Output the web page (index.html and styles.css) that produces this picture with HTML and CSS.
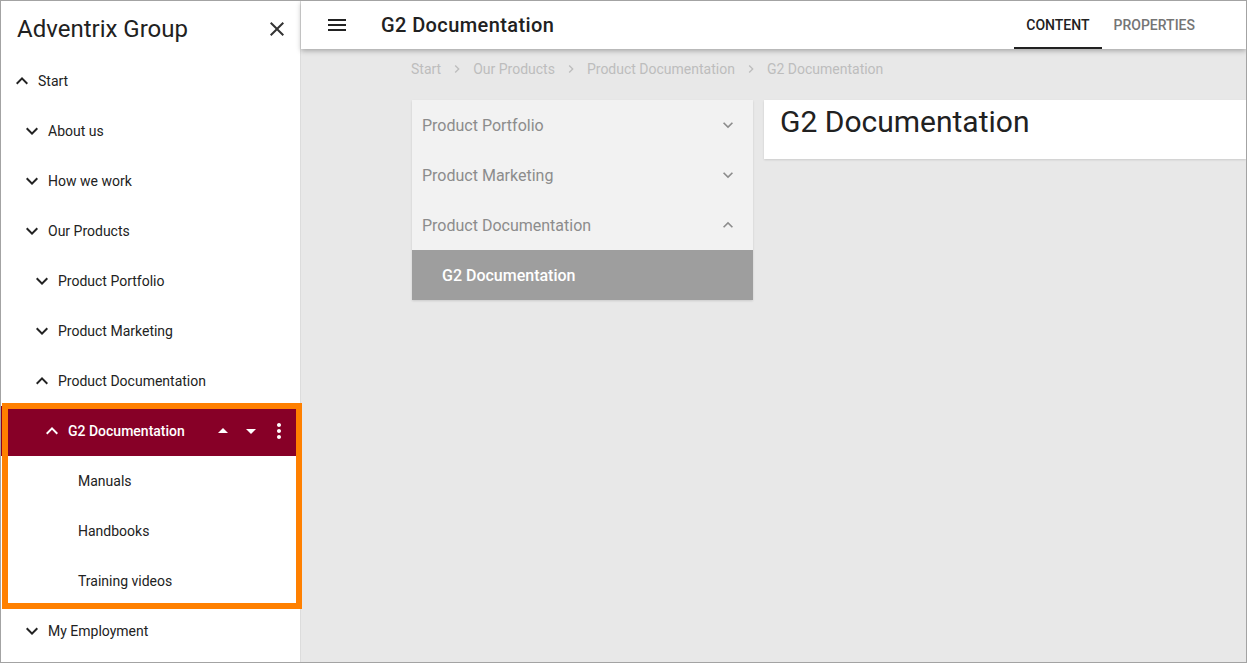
FILE: index.html
```html
<!DOCTYPE html>
<html>
<head>
<meta charset="utf-8">
<link rel="stylesheet" href="styles.css">
</head>
<body>
<div class="frame">
  <aside class="sidebar">
    <div class="side-head">
      <span class="side-title">Adventrix Group</span>
      <svg class="icon close" viewBox="0 0 24 24"><path d="M19 6.41L17.59 5 12 10.59 6.41 5 5 6.41 10.59 12 5 17.59 6.41 19 12 13.41 17.59 19 19 17.59 13.41 12z"/></svg>
    </div>
    <nav class="tree">
      <div class="row lv0"><svg class="icon chev" viewBox="0 0 24 24"><path d="M12 8l-6 6 1.41 1.41L12 10.83l4.59 4.58L18 14z"/></svg><span>Start</span></div>
      <div class="row lv1"><svg class="icon chev" viewBox="0 0 24 24"><path d="M16.59 8.59L12 13.17 7.41 8.59 6 10l6 6 6-6z"/></svg><span>About us</span></div>
      <div class="row lv1"><svg class="icon chev" viewBox="0 0 24 24"><path d="M16.59 8.59L12 13.17 7.41 8.59 6 10l6 6 6-6z"/></svg><span>How we work</span></div>
      <div class="row lv1"><svg class="icon chev" viewBox="0 0 24 24"><path d="M16.59 8.59L12 13.17 7.41 8.59 6 10l6 6 6-6z"/></svg><span>Our Products</span></div>
      <div class="row lv2"><svg class="icon chev" viewBox="0 0 24 24"><path d="M16.59 8.59L12 13.17 7.41 8.59 6 10l6 6 6-6z"/></svg><span>Product Portfolio</span></div>
      <div class="row lv2"><svg class="icon chev" viewBox="0 0 24 24"><path d="M16.59 8.59L12 13.17 7.41 8.59 6 10l6 6 6-6z"/></svg><span>Product Marketing</span></div>
      <div class="row lv2"><svg class="icon chev" viewBox="0 0 24 24"><path d="M12 8l-6 6 1.41 1.41L12 10.83l4.59 4.58L18 14z"/></svg><span>Product Documentation</span></div>
      <div class="row lv3 active">
        <svg class="icon chev" viewBox="0 0 24 24"><path d="M12 8l-6 6 1.41 1.41L12 10.83l4.59 4.58L18 14z"/></svg><span class="label">G2 Documentation</span>
        <div class="actions">
          <svg class="icon" viewBox="0 0 24 24"><path d="M7 14l5-5 5 5z"/></svg>
          <svg class="icon" viewBox="0 0 24 24"><path d="M7 10l5 5 5-5z"/></svg>
          <svg class="icon" viewBox="0 0 24 24"><path d="M12 8c1.1 0 2-.9 2-2s-.9-2-2-2-2 .9-2 2 .9 2 2 2zm0 2c-1.1 0-2 .9-2 2s.9 2 2 2 2-.9 2-2-.9-2-2-2zm0 6c-1.1 0-2 .9-2 2s.9 2 2 2 2-.9 2-2-.9-2-2-2z"/></svg>
        </div>
      </div>
      <div class="row lv4"><span class="spacer"></span><span>Manuals</span></div>
      <div class="row lv4"><span class="spacer"></span><span>Handbooks</span></div>
      <div class="row lv4"><span class="spacer"></span><span>Training videos</span></div>
      <div class="row lv1"><svg class="icon chev" viewBox="0 0 24 24"><path d="M16.59 8.59L12 13.17 7.41 8.59 6 10l6 6 6-6z"/></svg><span>My Employment</span></div>
    </nav>
    <div class="highlight"></div>
  </aside>
  <main class="main">
    <header class="topbar">
      <svg class="icon menu" viewBox="0 0 24 24"><path d="M3 18h18v-2H3v2zm0-5h18v-2H3v2zm0-7v2h18V6H3z"/></svg>
      <h1 class="page-title">G2 Documentation</h1>
      <div class="tabs">
        <div class="tab current">Content</div>
        <div class="tab">Properties</div>
      </div>
    </header>
    <div class="content">
      <div class="crumbs">
        <span>Start</span>
        <svg class="sep" viewBox="0 0 24 24"><path d="M10 6L8.59 7.41 13.17 12l-4.58 4.59L10 18l6-6z"/></svg>
        <span>Our Products</span>
        <svg class="sep" viewBox="0 0 24 24"><path d="M10 6L8.59 7.41 13.17 12l-4.58 4.59L10 18l6-6z"/></svg>
        <span>Product Documentation</span>
        <svg class="sep" viewBox="0 0 24 24"><path d="M10 6L8.59 7.41 13.17 12l-4.58 4.59L10 18l6-6z"/></svg>
        <span>G2 Documentation</span>
      </div>
      <div class="cards">
        <div class="menu-card">
          <div class="mrow"><span>Product Portfolio</span><svg class="mchev" viewBox="0 0 24 24"><path d="M16.59 8.59L12 13.17 7.41 8.59 6 10l6 6 6-6z"/></svg></div>
          <div class="mrow"><span>Product Marketing</span><svg class="mchev" viewBox="0 0 24 24"><path d="M16.59 8.59L12 13.17 7.41 8.59 6 10l6 6 6-6z"/></svg></div>
          <div class="mrow"><span>Product Documentation</span><svg class="mchev" viewBox="0 0 24 24"><path d="M12 8l-6 6 1.41 1.41L12 10.83l4.59 4.58L18 14z"/></svg></div>
          <div class="mrow sub"><span>G2 Documentation</span></div>
        </div>
        <div class="title-card">
          <h2>G2 Documentation</h2>
        </div>
      </div>
    </div>
  </main>
</div>
</body>
</html>
```
FILE: styles.css
```css
html, body {
  margin: 0;
  padding: 0;
  background: #fff;
}
body {
  font-family: Roboto, "Noto Sans", "Liberation Sans", sans-serif;
  color: #212121;
}
.frame {
  width: 1247px;
  height: 663px;
  box-sizing: border-box;
  border: 1px solid #a3a3a3;
  display: flex;
  overflow: hidden;
}
.icon {
  width: 24px;
  height: 24px;
  fill: currentColor;
  flex: none;
  display: block;
}
/* Sidebar */
.sidebar {
  width: 300px;
  flex: none;
  box-sizing: border-box;
  border-right: 1px solid #dcdcdc;
  background: #fff;
  position: relative;
}
.side-head {
  height: 55px;
  display: flex;
  align-items: center;
  padding: 0 11px 0 16px;
}
.side-title {
  font-size: 24px;
  color: #212121;
  flex: 1;
}
.close {
  color: #333;
}
.tree {
  display: flex;
  flex-direction: column;
}
.row {
  height: 50px;
  display: flex;
  align-items: center;
  font-size: 14px;
  color: #222;
  padding-right: 9px;
}
.row .chev, .row .spacer {
  margin-right: 4px;
}
.row .spacer {
  width: 24px;
  flex: none;
}
.lv0 { padding-left: 9px; }
.lv1 { padding-left: 19px; }
.lv2 { padding-left: 29px; }
.lv3 { padding-left: 39px; }
.lv4 { padding-left: 49px; }
.active {
  background: #870027;
  color: #fff;
  font-weight: 500;
}
.active .label {
  flex: 1;
}
.actions {
  display: flex;
  gap: 4px;
}
.highlight {
  position: absolute;
  left: 1px;
  top: 402px;
  width: 300px;
  height: 206px;
  box-sizing: border-box;
  border: 6px solid #ff8000;
  pointer-events: none;
}
/* Main */
.main {
  flex: 1;
  background: #e8e8e8;
  display: flex;
  flex-direction: column;
  min-width: 0;
}
.topbar {
  height: 48px;
  flex: none;
  background: #fff;
  display: flex;
  align-items: center;
  padding-left: 24px;
  box-shadow: 0 2px 5px rgba(0, 0, 0, 0.28);
  position: relative;
  z-index: 1;
}
.menu {
  color: #222;
}
.page-title {
  margin: 0 0 0 32px;
  font-size: 20px;
  font-weight: 500;
  letter-spacing: 0.4px;
  color: #212121;
  flex: 1;
}
.tabs {
  display: flex;
  height: 48px;
  margin-right: 39px;
}
.tab {
  height: 48px;
  box-sizing: border-box;
  padding: 0 12px;
  display: flex;
  align-items: center;
  font-size: 14px;
  font-weight: 500;
  text-transform: uppercase;
  color: #757575;
  border-bottom: 2px solid transparent;
  padding-top: 2px;
}
.tab.current {
  color: #212121;
  border-bottom-color: #212121;
}
.content {
  padding: 10px 0 0 110px;
}
.crumbs {
  display: flex;
  align-items: center;
  height: 20px;
  font-size: 14px;
  color: #bdbdbd;
}
.sep {
  width: 16px;
  height: 16px;
  fill: #bdbdbd;
  margin: 0 8px;
}
.cards {
  display: flex;
  align-items: flex-start;
  gap: 11px;
  margin-top: 21px;
  margin-left: 1px;
}
.menu-card {
  width: 341px;
  flex: none;
  background: #f2f2f2;
  box-shadow: 0 1px 2px rgba(0, 0, 0, 0.12);
}
.mrow {
  height: 50px;
  display: flex;
  align-items: center;
  padding: 0 15px 0 10px;
  font-size: 16px;
  color: #8c8c8c;
}
.mrow span {
  flex: 1;
}
.mchev {
  width: 20px;
  height: 20px;
  fill: #8c8c8c;
}
.mrow.sub {
  background: #9e9e9e;
  color: #fff;
  font-weight: 500;
  padding-left: 30px;
}
.title-card {
  flex: 1;
  background: #fff;
  height: 59px;
  box-sizing: border-box;
  padding: 4px 16px 0;
  box-shadow: 0 1px 2px rgba(0, 0, 0, 0.12);
}
.title-card h2 {
  margin: 0;
  font-size: 30px;
  font-weight: 400;
  line-height: 36px;
  color: #212121;
}
```
